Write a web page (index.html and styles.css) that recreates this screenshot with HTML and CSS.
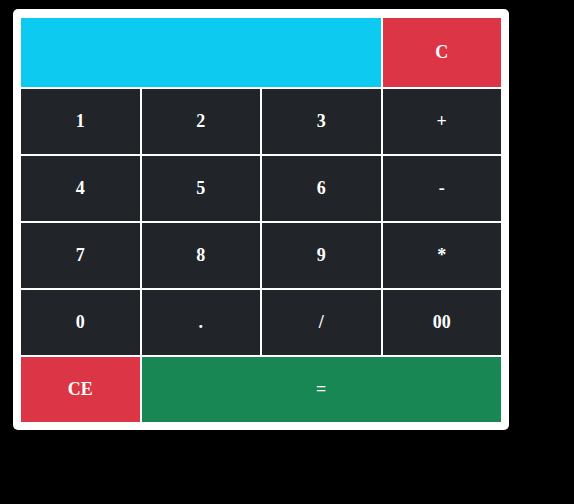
FILE: index.html
```html
<!DOCTYPE html>
<html>
<head>
<meta charset="utf-8">
<link rel="stylesheet" href="styles.css">
</head>
<body>
<div class="calc">
  <div class="display"></div>
  <div class="key red">C</div>
  <div class="key">1</div>
  <div class="key">2</div>
  <div class="key">3</div>
  <div class="key">+</div>
  <div class="key">4</div>
  <div class="key">5</div>
  <div class="key">6</div>
  <div class="key">-</div>
  <div class="key">7</div>
  <div class="key">8</div>
  <div class="key">9</div>
  <div class="key">*</div>
  <div class="key">0</div>
  <div class="key">.</div>
  <div class="key">/</div>
  <div class="key">00</div>
  <div class="key red">CE</div>
  <div class="key green wide">=</div>
</div>
</body>
</html>
```
FILE: styles.css
```css
html, body {
  margin: 0;
  padding: 0;
  background: #000;
}
body {
  padding: 9px 0 0 13px;
}
.calc {
  width: 480px;
  padding: 9px 8px 8px 8px;
  background: #fff;
  border-radius: 5px;
  display: grid;
  grid-template-columns: repeat(4, 1fr);
  grid-template-rows: 69px repeat(5, 65px);
  gap: 2px;
  font-family: "Liberation Serif", "Times New Roman", serif;
  font-weight: bold;
  font-size: 18px;
  color: #fff;
}
.display {
  grid-column: span 3;
  background: #0dcaf0;
}
.key {
  background: #212529;
  display: flex;
  align-items: center;
  justify-content: center;
}
.key.red {
  background: #dc3545;
}
.key.green {
  background: #198754;
}
.key.wide {
  grid-column: span 3;
}
```
